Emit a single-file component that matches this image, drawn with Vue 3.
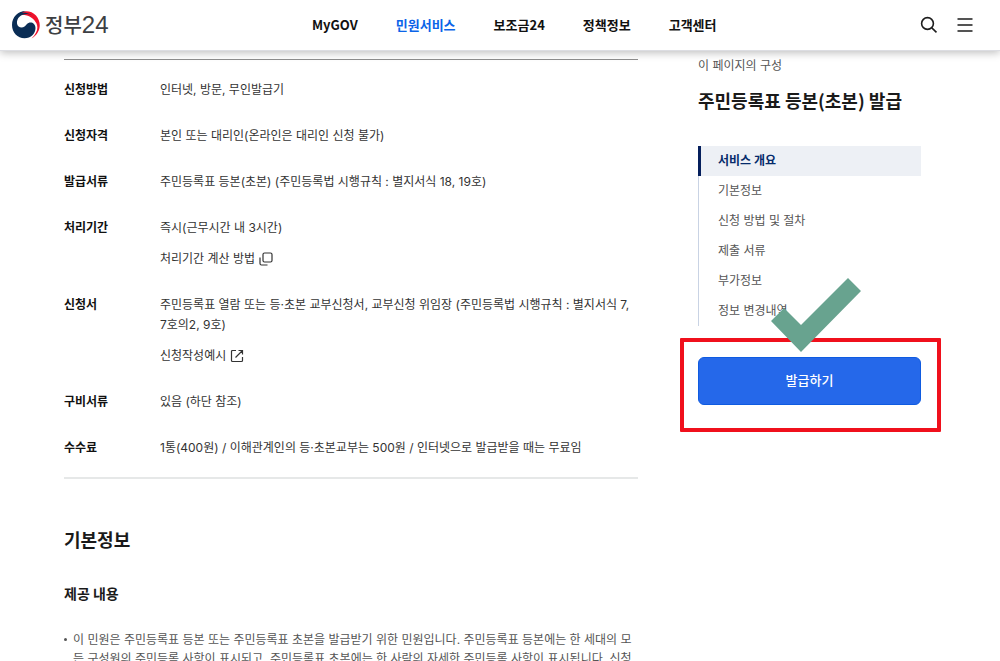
<script setup>
const menu = [
  { label: 'MyGOV' },
  { label: '민원서비스', active: true },
  { label: '보조금24' },
  { label: '정책정보' },
  { label: '고객센터' }
]
const rows = [
  { term: '신청방법', lines: ['인터넷, 방문, 무인발급기'] },
  { term: '신청자격', lines: ['본인 또는 대리인(온라인은 대리인 신청 불가)'] },
  { term: '발급서류', lines: ['주민등록표 등본(초본) (주민등록법 시행규칙 : 별지서식 18, 19호)'] },
  { term: '처리기간', lines: ['즉시(근무시간 내 3시간)'], link: '처리기간 계산 방법', icon: 'copy' },
  {
    term: '신청서',
    lines: ['주민등록표 열람 또는 등·초본 교부신청서, 교부신청 위임장 (주민등록법 시행규칙 : 별지서식 7,', '7호의2, 9호)'],
    link: '신청작성예시',
    icon: 'external'
  },
  { term: '구비서류', lines: ['있음 (하단 참조)'] },
  { term: '수수료', lines: ['1통(400원) / 이해관계인의 등·초본교부는 500원 / 인터넷으로 발급받을 때는 무료임'] }
]
const sections = ['서비스 개요', '기본정보', '신청 방법 및 절차', '제출 서류', '부가정보', '정보 변경내역']
const details = [
  '이 민원은 주민등록표 등본 또는 주민등록표 초본을 발급받기 위한 민원입니다. 주민등록표 등본에는 한 세대의 모',
  '든 구성원의 주민등록 사항이 표시되고, 주민등록표 초본에는 한 사람의 자세한 주민등록 사항이 표시됩니다. 신청'
]
</script>

<template>
  <div class="page">
    <header class="header">
      <a class="logo" href="#">
        <svg width="28" height="28" viewBox="0 0 28 28" aria-hidden="true">
          <path d="M4.5 4.6C10-1.6 19-1 24 4.4C30 11.5 29 22 19.5 27.5C25 22 26.5 17 24.5 12.5C22 7 14 1.5 4.5 4.6Z" fill="#f0112b" />
          <path d="M14 0C6 0 0 6 0 14C0 21.5 5.5 27.2 12.5 27.2C19 27.2 23.5 22.5 23.5 17C23.5 13.5 21 11.5 18.5 11.5C15.5 11.5 14.5 14 12.5 15.5C10 17.5 5.5 16.5 5 12.5C4.5 7 9 3 15 3C18 3 21 4.5 23 7C20.500 3.500 15 1 10 1.800C11.200 1 12.500 0.300 14 0Z" fill="#0a2d55" />
        </svg>
        <span class="logo-text">정부<span class="logo-number">24</span></span>
      </a>
      <nav class="menu" aria-label="주 메뉴">
        <a v-for="item in menu" :key="item.label" href="#" :class="{ active: item.active }">{{ item.label }}</a>
      </nav>
      <div class="tools">
        <button type="button" aria-label="검색">
          <svg width="18" height="18" viewBox="0 0 18 18" fill="none" stroke="#1d1d1d" stroke-width="1.6">
            <circle cx="7.5" cy="7.5" r="5.9" />
            <path d="M11.8 11.8L16.5 16.3" />
          </svg>
        </button>
        <button type="button" aria-label="전체 메뉴">
          <svg width="16" height="18" viewBox="0 0 16 18" stroke="#1d1d1d" stroke-width="1.7">
            <path d="M0.5 3H15.5M0.5 9H15.5M0.5 15H15.5" />
          </svg>
        </button>
      </div>
    </header>

    <main class="content">
      <article>
        <dl class="summary">
          <div v-for="row in rows" :key="row.term" class="row">
            <dt>{{ row.term }}</dt>
            <dd>
              <span v-for="line in row.lines" :key="line" class="line">{{ line }}</span>
              <a v-if="row.link" href="#" class="more">
                {{ row.link }}
                <svg v-if="row.icon === 'copy'" width="14" height="14" viewBox="0 0 14 14" fill="none" stroke="#333" stroke-width="1.2">
                  <rect x="4" y="1" width="9" height="9" rx="1.5" />
                  <path d="M1 5.5V11.5Q1 13 2.5 13H8.5" />
                </svg>
                <svg v-else width="14" height="14" viewBox="0 0 14 14" fill="none" stroke="#333" stroke-width="1.2">
                  <path d="M6 1.5H2.5Q1.5 1.5 1.5 2.5V11.5Q1.5 12.5 2.5 12.5H11.5Q12.5 12.5 12.5 11.5V8M8.5 1.5H12.5V5.5M12.5 1.5L5.5 8.5" />
                </svg>
              </a>
            </dd>
          </div>
        </dl>
        <h2>기본정보</h2>
        <h3>제공 내용</h3>
        <ul class="details">
          <li><span v-for="line in details" :key="line" class="line">{{ line }}</span></li>
        </ul>
      </article>

      <aside>
        <p class="caption">이 페이지의 구성</p>
        <h2 class="title">주민등록표 등본(초본) 발급</h2>
        <nav class="toc" aria-label="이 페이지의 구성">
          <a v-for="(name, i) in sections" :key="name" href="#" :class="{ active: i === 0 }">{{ name }}</a>
        </nav>
        <div class="issue">
          <button type="button">발급하기</button>
          <div class="frame"></div>
          <svg class="check" width="90" height="74" viewBox="0 0 90 74" aria-hidden="true">
            <path d="M0 43L13 30L30 47L77 0L90 13L30 74Z" fill="#68a38f" />
          </svg>
        </div>
      </aside>
    </main>
  </div>
</template>

<style>
body {
  margin: 0;
  background: #fff;
}
</style>

<style scoped>
.page {
  height: 100vh;
  overflow: hidden;
  font-family: Inter, "Noto Sans CJK KR", sans-serif;
  font-size: 12px;
  line-height: 20px;
  color: #333;
}
a {
  color: inherit;
  text-decoration: none;
}
button {
  font: inherit;
  border: 0;
  padding: 0;
  background: none;
  cursor: pointer;
}
svg {
  display: block;
}
.header {
  position: relative;
  z-index: 1;
  display: grid;
  grid-template-columns: 300px 1fr auto;
  align-items: center;
  height: 50px;
  padding: 0 27px 0 12px;
  background: #fff;
  border-bottom: 1px solid #dcdde2;
  box-shadow: 0 2px 8px rgba(0, 0, 0, 0.25);
}
.logo {
  display: flex;
  align-items: center;
  gap: 5px;
}
.logo-text {
  font-family: "Noto Sans CJK KR", sans-serif;
  font-size: 20px;
  font-weight: 500;
  line-height: 28px;
  color: #3d3f43;
}
.logo-number {
  font-family: "Liberation Sans", sans-serif;
  font-size: 24px;
}
.menu {
  display: flex;
  gap: 38px;
  font-family: "Noto Sans CJK KR", sans-serif;
  font-size: 13px;
  font-weight: 700;
  color: #111;
}
.menu .active {
  color: #0b64e8;
}
.tools {
  display: flex;
  gap: 19px;
}
.content {
  display: grid;
  grid-template-columns: minmax(0, 1fr) 223px;
  gap: 60px;
  padding: 8px 79px 0 64px;
}
.summary {
  margin: 0;
  padding: 7px 0 6px;
  border-top: 1px solid #8e8e8e;
  border-bottom: 2px solid #e6e8e8;
}
.row {
  display: grid;
  grid-template-columns: 96px minmax(0, 1fr);
  padding: 13px 0;
}
dt {
  font-weight: 700;
  color: #111;
}
dd {
  margin: 0;
}
.line {
  display: block;
  white-space: nowrap;
}
.more {
  display: flex;
  align-items: center;
  gap: 4px;
  margin-top: 11px;
}
h2 {
  margin: 46px 0 0;
  font-family: "Noto Sans CJK KR", sans-serif;
  font-size: 18px;
  font-weight: 700;
  line-height: 28px;
  color: #1a1a1a;
}
h3 {
  margin: 30px 0 0;
  font-family: "Noto Sans CJK KR", sans-serif;
  font-size: 14px;
  font-weight: 700;
  line-height: 20px;
  color: #1a1a1a;
}
.details {
  margin: 27px 0 0;
  padding: 0;
  list-style: none;
  line-height: 19px;
  color: #555;
}
.details li {
  display: grid;
  grid-template-columns: 9px minmax(0, 1fr);
}
.details li::before {
  content: "";
  grid-row: 1 / 3;
  width: 3px;
  height: 3px;
  margin-top: 8px;
  border-radius: 50%;
  background: #555;
}
.caption {
  margin: 0;
  line-height: 14px;
  color: #555;
}
.title {
  margin: 13px 0 0;
}
.toc {
  display: flex;
  flex-direction: column;
  margin-top: 32px;
  border-left: 1px solid #c9d3e4;
  line-height: 30px;
  color: #555;
}
.toc a {
  padding-left: 19px;
}
.toc .active {
  margin-left: -1px;
  padding-left: 17px;
  border-left: 3px solid #051f5c;
  background: #edf0f5;
  color: #052b6b;
  font-weight: 700;
}
.issue {
  position: relative;
  margin-top: 31px;
}
.issue button {
  display: block;
  width: 100%;
  height: 48px;
  padding-bottom: 2px;
  border: 1px solid #0f5be0;
  border-radius: 6px;
  background: #2568ea;
  color: #fff;
  font-size: 13px;
  font-weight: 500;
}
.frame {
  position: absolute;
  inset: -19px -20px -27px -18px;
  border: 4px solid #f0101c;
  border-radius: 1px;
  pointer-events: none;
}
.check {
  position: absolute;
  left: 73px;
  top: -79px;
}
</style>
